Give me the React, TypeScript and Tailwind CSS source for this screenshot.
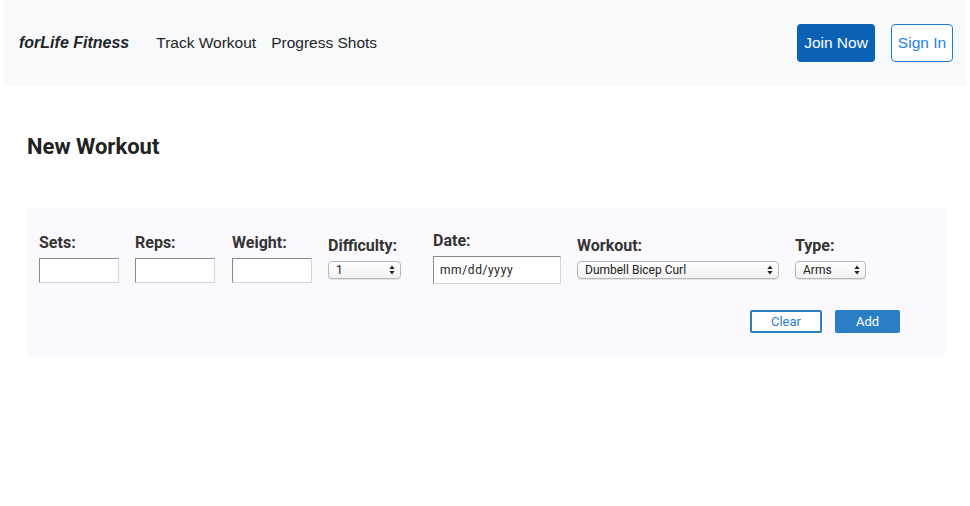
import React from "react";

function Arrows() {
  return (
    <svg width="6" height="10" viewBox="0 0 6 10" className="shrink-0">
      <path d="M3 0.5 L5.6 4 L0.4 4 Z" fill="#222" />
      <path d="M3 9.5 L5.6 6 L0.4 6 Z" fill="#222" />
    </svg>
  );
}

function FakeSelect({ value, w }: { value: string; w: string }) {
  return (
    <div
      className={`${w} h-[18px] flex items-center justify-between pl-[7px] pr-[5px] rounded-[4px] border border-[#b8b8b8] bg-gradient-to-b from-white to-[#f1f1f1] text-[12px] leading-none text-[#222] shadow-[0_0.5px_1px_rgba(0,0,0,0.1)]`}
      style={{ fontFamily: "Roboto, sans-serif" }}
    >
      <span>{value}</span>
      <Arrows />
    </div>
  );
}

function Label({ children }: { children: React.ReactNode }) {
  return (
    <div className="text-[16px] leading-[19px] font-bold text-[#333] mb-[6px]" style={{ fontFamily: "Roboto, sans-serif" }}>
      {children}
    </div>
  );
}

function TextBox({ w, h }: { w: string; h: string }) {
  return (
    <input
      className={`${w} ${h} bg-white border border-[#d6d6d6] border-t-[#8a8a8a] border-l-[#8a8a8a] outline-none`}
    />
  );
}

export default function App() {
  return (
    <div className="w-[970px] h-[506px] bg-white" style={{ fontFamily: "'Liberation Sans', Arial, sans-serif" }}>
      <nav className="mx-[4px] h-[86px] bg-[#f8f9fa] flex items-center pl-[15px] pr-[13px]">
        <span className="font-bold italic text-[16px] text-[#212529] mr-[27px]">forLife Fitness</span>
        <a className="text-[15.5px] text-[#212529] mr-[15px]">Track Workout</a>
        <a className="text-[15.5px] text-[#212529]">Progress Shots</a>
        <div className="ml-auto flex items-center gap-[16px]">
          <button className="h-[38px] w-[78px] rounded-[4px] bg-[#0a61b5] text-white text-[15.5px]">Join Now</button>
          <button className="h-[38px] w-[62px] rounded-[4px] bg-white border border-[#1f78d1] text-[#1b7fe6] text-[15.5px]">Sign In</button>
        </div>
      </nav>

      <div className="px-[27px]">
        <h1 className="mt-[49px] text-[22px] leading-[24px] font-bold text-[#222]" style={{ fontFamily: "Roboto, sans-serif" }}>
          New Workout
        </h1>

        <div className="mt-[49px] w-[918px] bg-[#fbf9fe] pt-[23px] pb-[24px] pl-[12px]">
          <div className="flex items-center">
            <div className="flex flex-col w-[80px] mr-[16px]">
              <Label>Sets:</Label>
              <TextBox w="w-[80px]" h="h-[25px]" />
            </div>
            <div className="flex flex-col w-[80px] mr-[17px]">
              <Label>Reps:</Label>
              <TextBox w="w-[80px]" h="h-[25px]" />
            </div>
            <div className="flex flex-col w-[80px] mr-[16px]">
              <Label>Weight:</Label>
              <TextBox w="w-[80px]" h="h-[25px]" />
            </div>
            <div className="flex flex-col w-[89px] mr-[16px]">
              <Label>Difficulty:</Label>
              <FakeSelect value="1" w="w-[73px]" />
            </div>
            <div className="flex flex-col w-[128px] mr-[16px]">
              <Label>Date:</Label>
              <div className="w-[128px] h-[28px] bg-white border border-[#d6d6d6] border-t-[#8a8a8a] border-l-[#8a8a8a] flex items-center pl-[6px] text-[12px] tracking-[0.6px] text-[#222]" style={{ fontFamily: "Roboto, sans-serif" }}>
                mm/dd/yyyy
              </div>
            </div>
            <div className="flex flex-col w-[202px] mr-[16px]">
              <Label>Workout:</Label>
              <FakeSelect value="Dumbell Bicep Curl" w="w-[202px]" />
            </div>
            <div className="flex flex-col w-[71px]">
              <Label>Type:</Label>
              <FakeSelect value="Arms" w="w-[71px]" />
            </div>
          </div>
          <div className="flex justify-end gap-[13px] mt-[26px] pr-[45px]">
            <button className="w-[72px] h-[23px] bg-white border-2 border-[#2a7fc4] rounded-[2px] text-[#2a7fc4] text-[13px] leading-none" style={{ fontFamily: "Roboto, sans-serif" }}>
              Clear
            </button>
            <button className="w-[65px] h-[23px] bg-[#2a7fc4] rounded-[2px] text-white text-[13px] leading-none" style={{ fontFamily: "Roboto, sans-serif" }}>
              Add
            </button>
          </div>
        </div>
      </div>
    </div>
  );
}
